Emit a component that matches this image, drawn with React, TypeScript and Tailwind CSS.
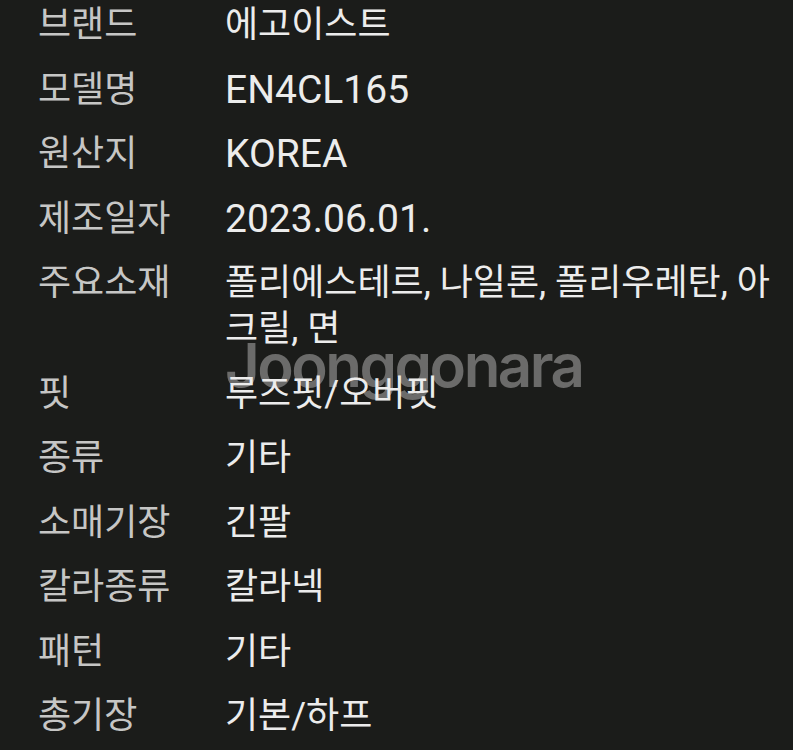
const rows: { label: string; value: React.ReactNode; latin?: boolean }[] = [
  { label: '브랜드', value: '에고이스트' },
  { label: '모델명', value: 'EN4CL165', latin: true },
  { label: '원산지', value: 'KOREA', latin: true },
  { label: '제조일자', value: '2023.06.01.', latin: true },
  {
    label: '주요소재',
    value: (
      <>
        폴리에스테르, 나일론, 폴리우레탄, 아<br />크릴, 면
      </>
    ),
  },
  { label: '핏', value: '루즈핏/오버핏' },
  { label: '종류', value: '기타' },
  { label: '소매기장', value: '긴팔' },
  { label: '칼라종류', value: '칼라넥' },
  { label: '패턴', value: '기타' },
  { label: '총기장', value: '기본/하프' },
];

export default function App() {
  return (
    <div
      className="relative h-[750px] w-[793px] overflow-hidden bg-[#1b1c1a]"
      style={{ fontFamily: "Roboto, 'Noto Sans CJK KR', sans-serif" }}
    >
      {/* watermark */}
      <div className="absolute left-[225px] top-[335px] z-0 select-none font-['Inter',sans-serif] text-[60px] font-semibold leading-none tracking-[-2.5px] text-[#6b6b6a]">
        Joonggonara
      </div>

      <div className="relative z-10 -mt-[7px] flex flex-col">
        {rows.map((row) => (
          <div key={row.label} className="flex py-[9.25px] leading-[46px]">
            <div className="w-[225px] shrink-0 pl-[38px] text-[36px] text-[#c6c6c5]">{row.label}</div>
            <div className={row.latin ? 'text-[39px] text-[#ececec]' : 'whitespace-nowrap text-[36px] text-[#ececec]'}>
              {row.value}
            </div>
          </div>
        ))}
      </div>
    </div>
  );
}
